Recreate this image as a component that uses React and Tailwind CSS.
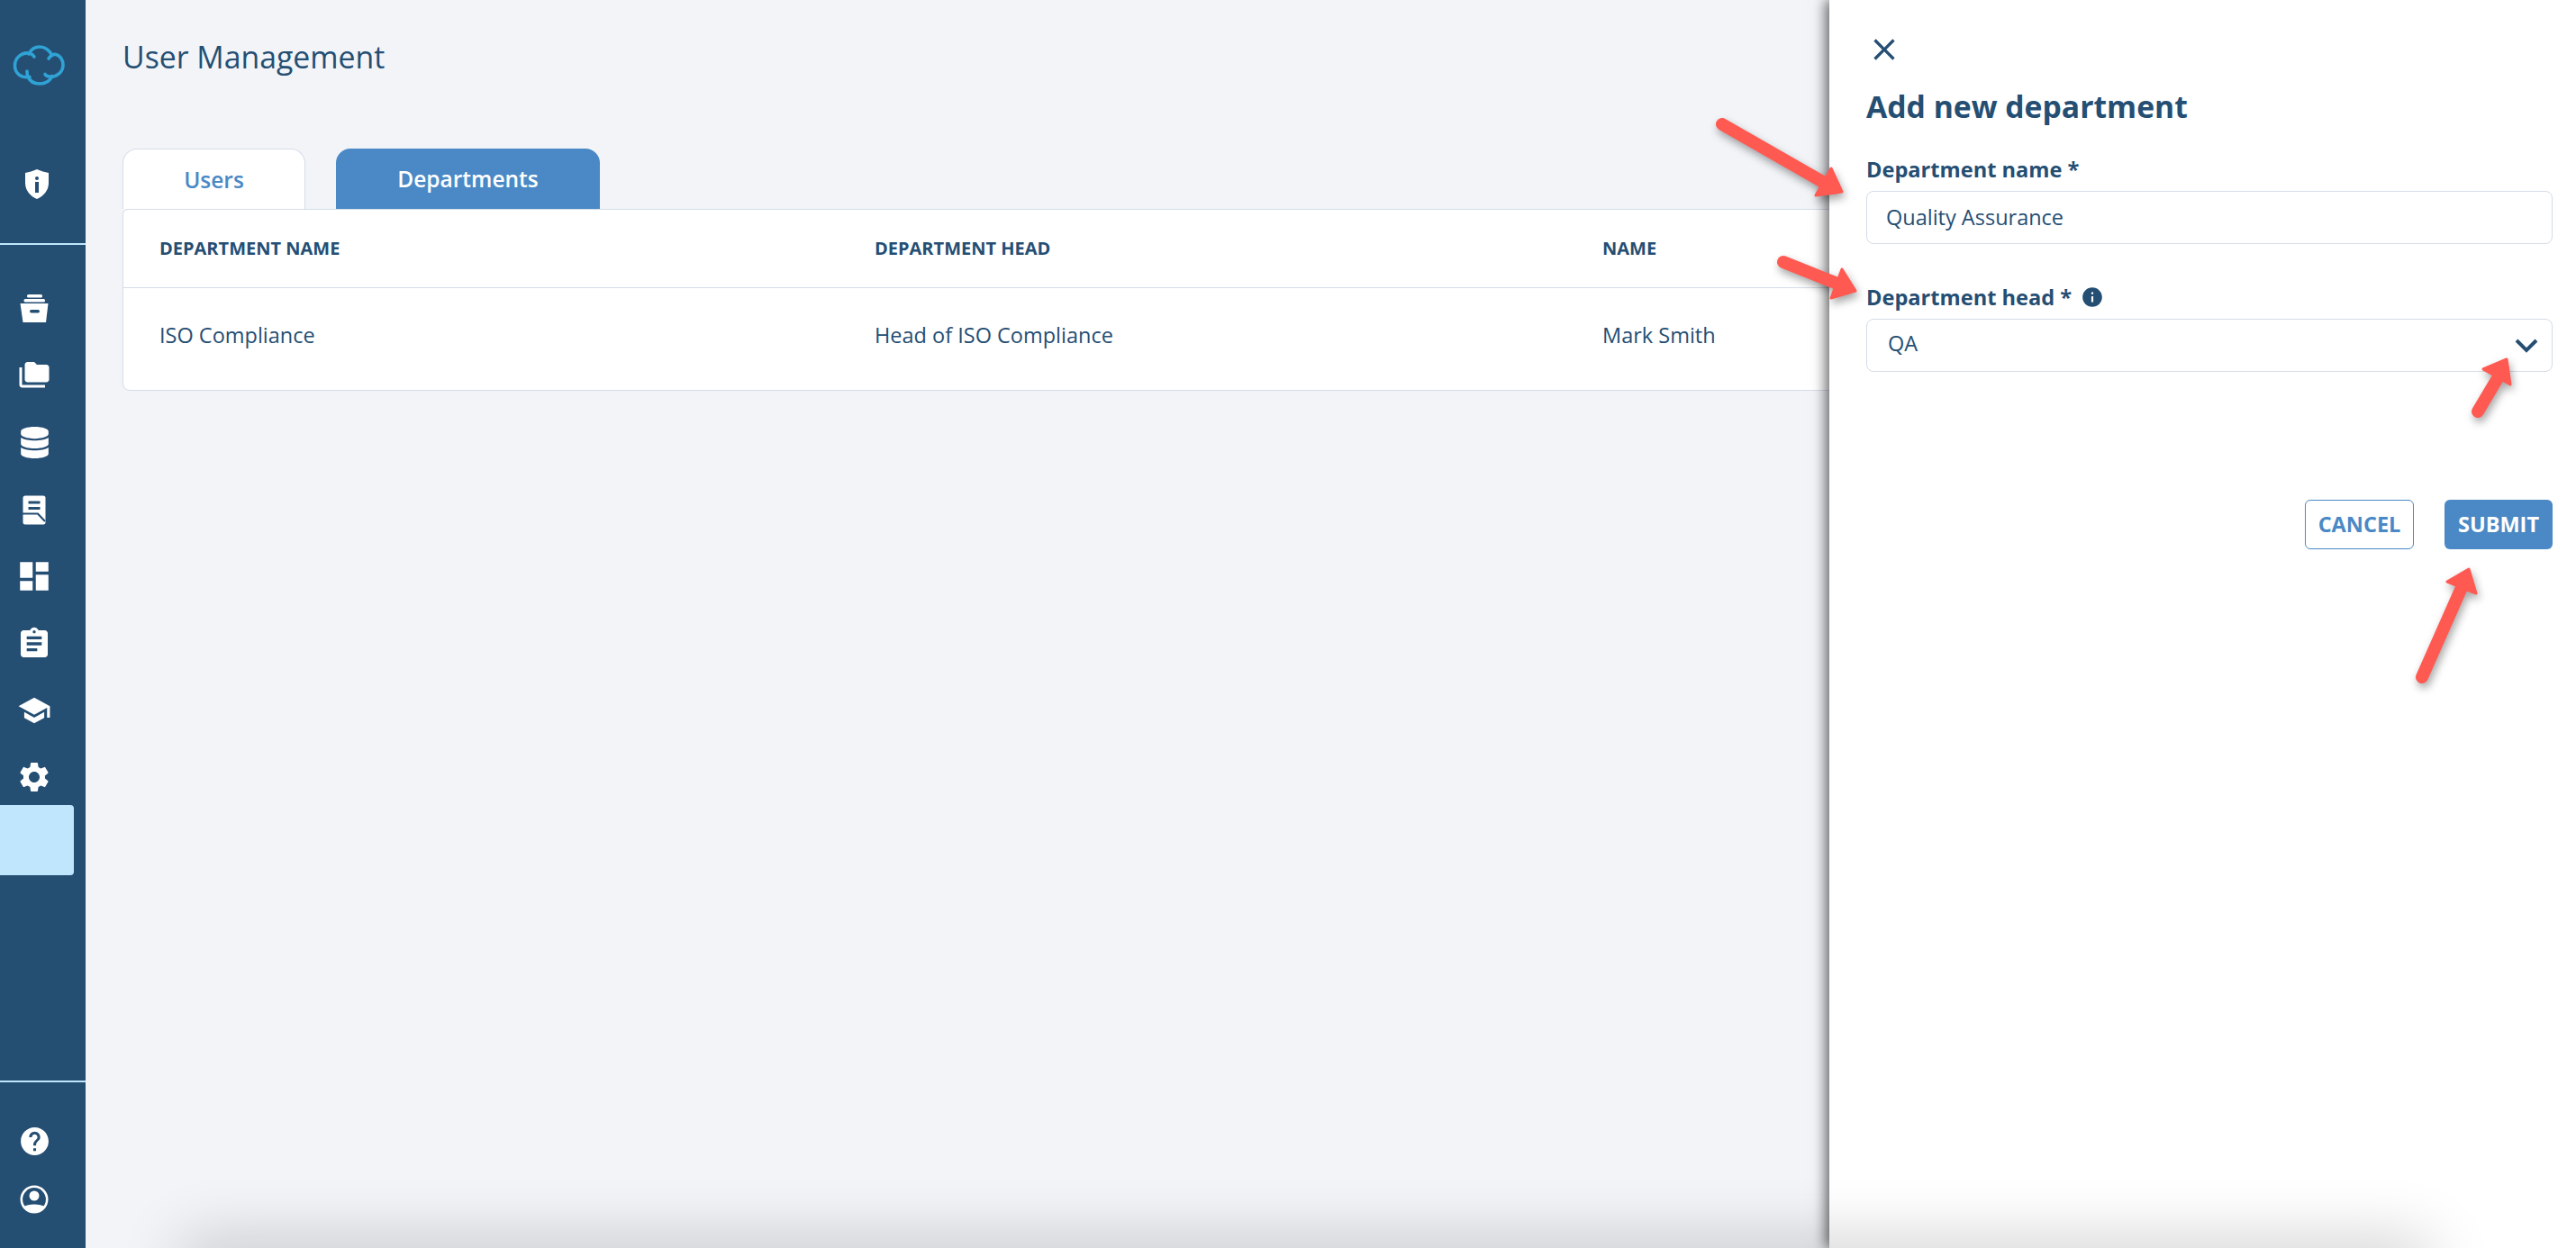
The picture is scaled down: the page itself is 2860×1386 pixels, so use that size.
import React from 'react';
import { MdFolderCopy, MdDashboard, MdAssignment, MdSchool, MdSettings, MdHelp, MdInfo, MdClose } from 'react-icons/md';
import { FaDatabase } from 'react-icons/fa';

const Logo = () => (
  <svg width="60" height="47" viewBox="0 0 60 47" fill="none" stroke="#2fa3d5" strokeWidth="3.6" strokeLinecap="round">
    <path d="M20 36.5 C10 38 3.5 32 3.5 24 C3.5 15 11 9 19 10 C22 10.5 24 12.5 25 14" />
    <path d="M19 11 C21.5 5.5 26 3 31 3 C37 3 42.5 7 44.5 12.5" />
    <path d="M41 16 C43.5 12.5 46.5 11 49 11.5 C54 12.5 57 18 57 23 C57 31 50 37 42 36 C40 36 38 35 37 33.5" />
    <path d="M45 35.5 C42.5 41 37 44 31 44 C25 44 20 41 18 36 C17 34 17 32 17 30" />
  </svg>
);

const ShieldInfo = () => (
  <svg width="28" height="34" viewBox="0 0 28 34">
    <path d="M14 0 C18 2 23 3 27 4 V15 C27 24 21 30 14 33 C7 30 1 24 1 15 V4 C5 3 10 2 14 0 Z" fill="#fff" />
    <circle cx="14" cy="10" r="2" fill="#254e73" />
    <rect x="12" y="14" width="4" height="12" fill="#254e73" />
  </svg>
);

const ArchiveIcon = () => (
  <svg width="32" height="33" viewBox="0 0 32 33" fill="#fff">
    <rect x="8" y="0" width="17" height="3.5" rx="1.5" />
    <rect x="4.5" y="5" width="23.5" height="3.5" rx="1.5" />
    <path d="M0.5 10 H31.5 L29 31 H3.5 Z" />
    <rect x="11" y="17" width="11" height="3.5" rx="1.75" fill="#254e73" />
  </svg>
);

const ReviewIcon = () => (
  <svg width="26" height="33" viewBox="0 0 26 33">
    <rect x="0.5" y="0.5" width="25" height="32" rx="2.5" fill="#fff" />
    <rect x="6.5" y="6.5" width="13" height="3" fill="#254e73" />
    <rect x="6.5" y="13" width="13" height="3" fill="#254e73" />
    <path d="M0 20.5 H17 L25 29" fill="none" stroke="#254e73" strokeWidth="2.2" />
  </svg>
);

const AccountIcon = () => (
  <svg width="32" height="32" viewBox="0 0 32 32">
    <circle cx="16" cy="16" r="14.2" fill="none" stroke="#fff" strokeWidth="2.6" />
    <circle cx="16" cy="12" r="5.5" fill="#fff" />
    <path d="M4.5 24 C9 20.5 23 20.5 27.5 24 C24.5 28 20.5 30 16 30 C11.5 30 7.5 28 4.5 24 Z" fill="#fff" />
  </svg>
);

const navItems = [
  <ArchiveIcon key="archive" />,
  <MdFolderCopy key="folders" size={36} color="#fff" />,
  <FaDatabase key="db" size={35} color="#fff" />,
  <ReviewIcon key="review" />,
  <MdDashboard key="dash" size={42} color="#fff" />,
  <MdAssignment key="assign" size={40} color="#fff" />,
  <MdSchool key="school" size={38} color="#fff" />,
  <MdSettings key="settings" size={40} color="#fff" />,
];

function Sidebar() {
  return (
    <aside className="w-[95px] h-full flex-shrink-0 bg-[#254e73] flex flex-col relative z-20">
      <div className="h-[272px] border-b-2 border-[#c0e6fd] flex-shrink-0 pt-[49px] pl-[13px]">
        <Logo />
        <div className="mt-[92px] ml-[14px]"><ShieldInfo /></div>
      </div>
      <nav className="pt-[34px] flex flex-col">
        {navItems.map((icon, i) => (
          <div key={i} className="h-[74.3px] w-[76px] flex items-center justify-center">{icon}</div>
        ))}
        <div className="-mt-[6px] h-[78px] w-[82px] bg-[#c0e6fd] rounded-r-sm" />
      </nav>
      <div className="mt-auto h-[186px] border-t-2 border-[#c0e6fd] pt-[47px] flex flex-col gap-[27px]">
        <div className="w-[76px] h-[37px] flex items-center justify-center"><MdHelp size={37} color="#fff" /></div>
        <div className="w-[76px] h-[37px] flex items-center justify-center"><AccountIcon /></div>
      </div>
    </aside>
  );
}

function DepartmentsTable() {
  return (
    <div className="bg-white border border-[#d5dde8] rounded-b-lg rounded-tl-md h-[202px] text-[#254e73]">
      <div className="h-[87px] border-b border-[#d5dde8] pl-[40px] grid grid-cols-[794px_808px_1fr] items-center text-[20px] font-bold">
        <span>DEPARTMENT NAME</span>
        <span>DEPARTMENT HEAD</span>
        <span>NAME</span>
      </div>
      <div className="h-[113px] pl-[40px] pb-[8px] grid grid-cols-[794px_808px_1fr] items-center text-[23.5px]">
        <span>ISO Compliance</span>
        <span>Head of ISO Compliance</span>
        <span>Mark Smith</span>
      </div>
    </div>
  );
}

function AddDepartmentPanel() {
  return (
    <div className="absolute top-0 right-0 bottom-0 w-[829px] bg-white pl-[41px] pr-[26px] shadow-[-4px_0_14px_rgba(0,0,0,0.6)] z-10 text-[#254e73]">
      <MdClose size={40} className="mt-[35px]" />
      <h2 className="mt-[20px] text-[33.7px] font-bold leading-[46px]">Add new department</h2>
      <label className="mt-[30px] block text-[23.6px] font-bold leading-[34px]">Department name *</label>
      <div className="mt-[7px] h-[59px] border border-[#d5dde8] rounded-lg pl-[21px] flex items-center text-[23.5px]">Quality Assurance</div>
      <label className="mt-[42px] flex items-center gap-[10px] text-[23.6px] font-bold leading-[34px]">
        Department head *
        <MdInfo size={26} />
      </label>
      <div className="mt-[7px] h-[59px] border border-[#d5dde8] rounded-lg pl-[23px] pr-[15px] flex items-center justify-between text-[23.5px]">
        <span className="-mt-[3px]">QA</span>
        <svg width="26" height="16" viewBox="0 0 26 16" fill="none" stroke="#254e73" strokeWidth="4">
          <path d="M2 2 L13 13 L24 2" />
        </svg>
      </div>
      <div className="mt-[142px] flex justify-end gap-[34px]">
        <button className="w-[121px] h-[55px] border border-[#4a89c5] rounded-md text-[#4a89c5] text-[23.5px] font-bold">CANCEL</button>
        <button className="w-[120px] h-[55px] bg-[#4a89c5] rounded-md text-white text-[23.5px] font-bold">SUBMIT</button>
      </div>
    </div>
  );
}

// red annotation arrows drawn on top of the shot
const arrows = [
  { tail: [1912, 138], tip: [2036, 209], head: '2033,187 2045,213 2016,217' },
  { tail: [1980, 291], tip: [2050, 319], head: '2045,299 2060,323 2033,331' },
  { tail: [2751, 457], tip: [2779, 410], head: '2757,410 2783,399 2787,427' },
  { tail: [2689, 752], tip: [2735, 648], head: '2717,646 2741,632 2749,659' },
];

function Annotations() {
  return (
    <svg className="absolute inset-0 z-30 drop-shadow-[2px_5px_5px_rgba(0,0,0,0.35)]" width="2860" height="1386" viewBox="0 0 2860 1386">
      {arrows.map((a, i) => (
        <g key={i}>
          <line x1={a.tail[0]} y1={a.tail[1]} x2={a.tip[0]} y2={a.tip[1]} stroke="#ff5a52" strokeWidth="14" strokeLinecap="round" />
          <polygon points={a.head} fill="#ff5a52" stroke="#ff5a52" strokeWidth="3" strokeLinejoin="round" />
        </g>
      ))}
    </svg>
  );
}

export default function App() {
  return (
    <div className="relative w-[2860px] h-[1386px] overflow-hidden flex bg-[#f2f4f8] font-['Open_Sans',sans-serif] text-[#254e73]">
      <Sidebar />

      <main className="flex-1 min-w-0 pl-[41px] pr-[40px]">
        <h1 className="mt-[40px] text-[33.8px] leading-[46px]">User Management</h1>

        {/* Tabs */}
        <div className="mt-[79px] flex gap-[34px] items-end">
          <div className="w-[203px] h-[67px] pt-[2px] bg-white border border-b-0 border-[#d5dde8] rounded-t-2xl flex items-center justify-center text-[24.5px] font-semibold text-[#4a89c5]">Users</div>
          <div className="w-[293px] h-[67px] pt-[2px] bg-[#4a89c5] rounded-t-2xl flex items-center justify-center text-[24.5px] font-semibold text-white">Departments</div>
        </div>
        <DepartmentsTable />
      </main>

      <AddDepartmentPanel />

      {/* window shadow clipped by the bottom of the shot */}
      <div className="absolute left-[210px] right-[170px] top-full h-[40px] z-10 shadow-[0_0_70px_8px_rgba(0,0,0,0.2)]" />

      <Annotations />
    </div>
  );
}
